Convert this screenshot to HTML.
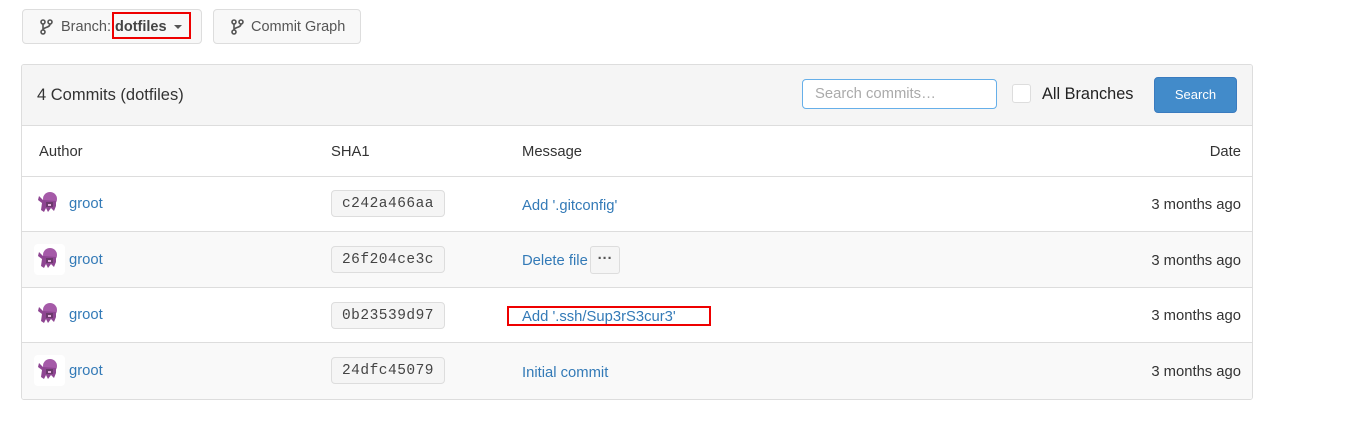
<!DOCTYPE html>
<html><head><style>
*{box-sizing:border-box}
body{margin:0;width:1346px;height:436px;background:#fff;font-family:"Liberation Sans",sans-serif;font-size:14.8px;color:#333;position:relative;overflow:hidden}
.abs{position:absolute}
.btn{position:absolute;border:1px solid #ddd;border-radius:4px;background:#f8f8f8;height:35px;top:9px;color:#555;font-size:14.5px;line-height:35px}
.panel{position:absolute;left:21px;top:64px;width:1232px;height:336px;border:1px solid #ddd;border-radius:3px;overflow:hidden}
.ph{position:absolute;left:0;top:0;right:0;height:61px;background:#f5f5f5;border-bottom:1px solid #ddd}
.row{position:absolute;left:0;right:0;border-bottom:1px solid #ddd}
.sha{position:absolute;left:309px;width:114px;height:27px;border:1px solid #ddd;border-radius:4px;background:#f5f5f5;font-family:"Liberation Mono",monospace;font-size:14.5px;color:#444;text-align:center;line-height:27px;letter-spacing:.5px}
a{color:#337ab7;text-decoration:none}
.av{position:absolute;left:12px;width:31px;height:31px;border-radius:4px}
</style></head><body>
<svg width="0" height="0" style="position:absolute"><defs>
<g id="br"><circle cx="3" cy="3" r="2" fill="none" stroke="#555" stroke-width="1.6"/><circle cx="3" cy="13" r="2" fill="none" stroke="#555" stroke-width="1.6"/><circle cx="10" cy="3" r="2" fill="none" stroke="#555" stroke-width="1.6"/><path d="M3 5V11M10 5C10 9 3 8 3 11" fill="none" stroke="#555" stroke-width="1.6"/></g>
<g id="oc"><ellipse cx="16" cy="11" rx="7" ry="7" fill="#a55aa8"/><path d="M9 12L5 8L4 12L8 15L7 22L10 24L12 20L14 24L17 20L20 23L22 18L22 13Z" fill="#8e4592"/><rect x="12" y="14" width="7" height="5" fill="#6a3a6b"/><rect x="14" y="16" width="3" height="2" fill="#e6b0e0"/></g>
</defs></svg>
<div class="btn" style="left:22px;width:180px"><svg class="abs" style="left:17px;top:9px" width="14" height="17"><use href="#br"/></svg><span class="abs" style="left:38px">Branch:</span><span class="abs" style="left:92px;font-weight:bold;color:#444">dotfiles</span><span class="abs" style="left:151px;top:15px;width:0;height:0;border-left:4px solid transparent;border-right:4px solid transparent;border-top:4px solid #555"></span></div>
<div class="abs" style="left:112px;top:12px;width:79px;height:27px;border:2px solid #e00"></div>
<div class="btn" style="left:213px;width:148px"><svg class="abs" style="left:17px;top:9px" width="14" height="17"><use href="#br"/></svg><span class="abs" style="left:37px">Commit Graph</span></div>
<div class="panel">
<div class="ph">
<div class="abs" style="left:15px;top:21px;font-size:16.5px;color:#333">4 Commits (dotfiles)</div>
<div class="abs" style="left:780px;top:14px;width:195px;height:30px;border:1px solid #66afe9;border-radius:4px;background:#fff;color:#aaa;padding-left:12px;line-height:29px">Search commits…</div>
<div class="abs" style="left:990px;top:19px;width:19px;height:19px;border:1px solid #ddd;border-radius:3px;background:#fff"></div>
<div class="abs" style="left:1020px;top:20px;font-size:16.3px;color:#222">All Branches</div>
<div class="abs" style="left:1132px;top:12px;width:83px;height:36px;background:#428bca;border:1px solid #3a7bbf;border-radius:4px;color:#fff;text-align:center;line-height:34px;font-size:13px">Search</div>
</div>
<div class="row" style="top:61px;height:51px;line-height:52px"><span class="abs" style="left:17px">Author</span><span class="abs" style="left:309px">SHA1</span><span class="abs" style="left:500px">Message</span><span class="abs" style="right:11px">Date</span></div>
<div class="row" style="top:112px;height:55px"><svg class="av" style="top:11px" viewBox="0 0 31 31"><use href="#oc"/></svg><a class="abs" style="left:47px;top:19px">groot</a><div class="sha" style="top:13px">c242a466aa</div><a class="abs" style="left:500px;top:21px">Add '.gitconfig'</a><span class="abs" style="right:11px;top:20px">3 months ago</span></div>
<div class="row" style="top:167px;height:56px;background:#f9f9f9"><svg class="av" style="top:12px;background:#fff" viewBox="0 0 31 31"><use href="#oc"/></svg><a class="abs" style="left:47px;top:20px">groot</a><div class="sha" style="top:14px">26f204ce3c</div><a class="abs" style="left:500px;top:21px">Delete file</a><div class="abs" style="left:568px;top:14px;width:30px;height:28px;border:1px solid #ddd;border-radius:3px;background:#f5f5f5;text-align:center;line-height:24px;font-weight:bold;color:#555">···</div><span class="abs" style="right:11px;top:21px">3 months ago</span></div>
<div class="row" style="top:223px;height:55px"><svg class="av" style="top:11px" viewBox="0 0 31 31"><use href="#oc"/></svg><a class="abs" style="left:47px;top:19px">groot</a><div class="sha" style="top:14px">0b23539d97</div><a class="abs" style="left:500px;top:21px">Add '.ssh/Sup3rS3cur3'</a><div class="abs" style="left:485px;top:18px;width:204px;height:20px;border:2px solid #e00"></div><span class="abs" style="right:11px;top:20px">3 months ago</span></div>
<div class="row" style="top:278px;height:56px;background:#f9f9f9;border-bottom:none"><svg class="av" style="top:12px;background:#fff" viewBox="0 0 31 31"><use href="#oc"/></svg><a class="abs" style="left:47px;top:20px">groot</a><div class="sha" style="top:14px">24dfc45079</div><a class="abs" style="left:500px;top:22px">Initial commit</a><span class="abs" style="right:11px;top:21px">3 months ago</span></div>
</div>
</body></html>
